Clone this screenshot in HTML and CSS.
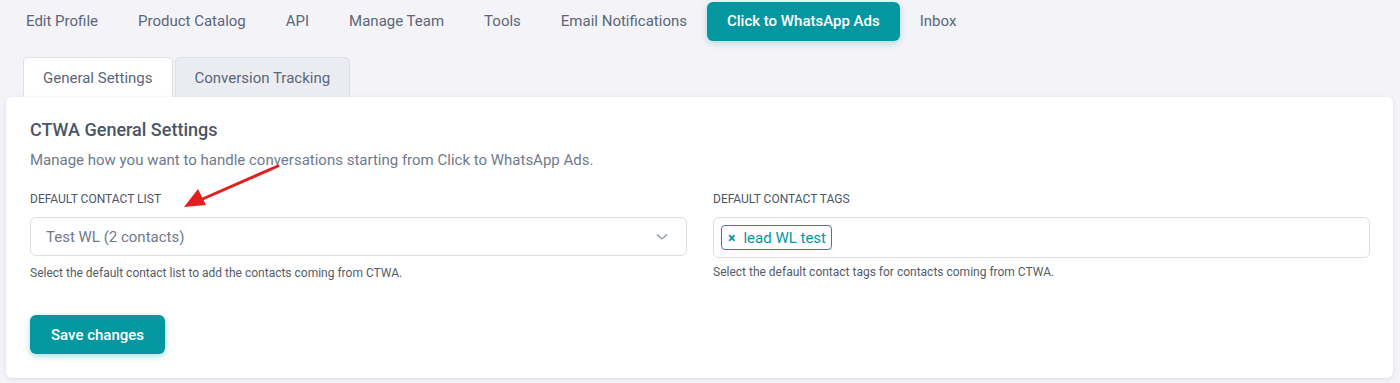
FILE: index.html
```html
<!DOCTYPE html>
<html>
<head>
<meta charset="utf-8">
<link rel="stylesheet" href="styles.css">
</head>
<body>
<div class="page">
  <nav class="topnav">
    <a class="nav-item">Edit Profile</a>
    <a class="nav-item">Product Catalog</a>
    <a class="nav-item">API</a>
    <a class="nav-item">Manage Team</a>
    <a class="nav-item">Tools</a>
    <a class="nav-item">Email Notifications</a>
    <a class="nav-item active">Click to WhatsApp Ads</a>
    <a class="nav-item">Inbox</a>
  </nav>
  <div class="subtabs">
    <div class="subtab active">General Settings</div>
    <div class="subtab">Conversion Tracking</div>
  </div>
  <section class="card">
    <h2 class="card-title">CTWA General Settings</h2>
    <p class="card-desc">Manage how you want to handle conversations starting from Click to WhatsApp Ads.</p>
    <div class="fields">
      <div class="field">
        <label class="field-label">DEFAULT CONTACT LIST</label>
        <div class="select">
          <span class="select-value">Test WL (2 contacts)</span>
          <svg class="chevron" width="12" height="8" viewBox="0 0 12 8"><path d="M1 1.5 L6 6 L11 1.5" fill="none" stroke="#8a94a6" stroke-width="1.3"/></svg>
        </div>
        <p class="help">Select the default contact list to add the contacts coming from CTWA.</p>
      </div>
      <div class="field">
        <label class="field-label">DEFAULT CONTACT TAGS</label>
        <div class="tags-input">
          <span class="tag"><span class="tag-x">×</span>lead WL test</span>
        </div>
        <p class="help">Select the default contact tags for contacts coming from CTWA.</p>
      </div>
    </div>
    <button class="btn">Save changes</button>
    <svg class="arrow" width="110" height="50" viewBox="0 0 110 50">
      <line x1="100" y1="3" x2="20" y2="38" stroke="#e41e1e" stroke-width="3" stroke-linecap="round"/>
      <polygon points="6,44 20,26 28,42" fill="#e41e1e"/>
    </svg>
  </section>
</div>
</body>
</html>
```
FILE: styles.css
```css
* { box-sizing: border-box; }
html, body { margin: 0; padding: 0; }
body {
  background: #f3f3f8;
  font-family: Roboto, "Liberation Sans", sans-serif;
  color: #4b5566;
  width: 1400px;
  height: 383px;
  overflow: hidden;
}
.page { padding: 2px 7px 0 6px; }
.topnav {
  display: flex;
  align-items: center;
  height: 39px;
}
.nav-item {
  display: flex;
  align-items: center;
  height: 39px;
  padding: 0 20px 1px;
  font-size: 15px;
  color: #5b6679;
  border-radius: 6px;
}
.nav-item.active {
  background: #05979f;
  color: #fff;
  font-weight: 500;
  box-shadow: 0 2px 6px rgba(5, 151, 159, 0.3);
}
.subtabs {
  display: flex;
  gap: 2px;
  margin-top: 16px;
  padding-left: 17px;
}
.subtab {
  height: 40px;
  display: flex;
  align-items: center;
  padding: 0 19px;
  font-size: 15px;
  color: #5b6679;
  background: #ebecf1;
  border: 1px solid #dfe1e7;
  border-bottom: none;
  border-radius: 5px 5px 0 0;
}
.subtab.active { background: #fff; }
.card {
  position: relative;
  background: #fff;
  border-radius: 6px;
  box-shadow: 0 1px 4px rgba(60, 70, 110, 0.12);
  padding: 22px 23px 25px 24px;
  height: 281px;
}
.card-title {
  margin: 0;
  font-size: 18px;
  font-weight: 500;
  color: #4b5566;
  line-height: 22px;
}
.card-desc {
  margin: 10px 0 0;
  font-size: 15px;
  color: #6f7a8c;
  line-height: 18px;
}
.fields {
  display: grid;
  grid-template-columns: 1fr 1fr;
  gap: 26px;
  margin-top: 23px;
}
.field-label {
  display: block;
  font-size: 12px;
  color: #4b5566;
  line-height: 14px;
  margin-bottom: 11px;
}
.select {
  height: 39px;
  border: 1px solid #dcdee4;
  border-radius: 6px;
  display: flex;
  align-items: center;
  justify-content: space-between;
  padding: 0 18px 0 15px;
}
.select-value { font-size: 15px; color: #6f7a8c; }
.tags-input {
  height: 41px;
  border: 1px solid #dcdee4;
  border-radius: 6px;
  display: flex;
  align-items: center;
  padding: 0 7px;
}
.tag {
  display: inline-flex;
  align-items: center;
  height: 25px;
  padding: 0 5px 0 6px;
  border: 1px solid #05979f;
  border-radius: 4px;
  color: #05979f;
  font-size: 15px;
}
.tag-x { font-size: 14px; font-weight: 700; margin-right: 8px; }
.help {
  margin: 10px 0 0;
  font-size: 12px;
  color: #555c66;
  line-height: 14px;
}
.field:last-child .help { margin-top: 7px; }
.btn {
  margin-top: 35px;
  height: 39px;
  padding: 0 21px;
  border: none;
  border-radius: 6px;
  background: #05979f;
  color: #fff;
  font-family: Roboto, "Liberation Sans", sans-serif;
  font-size: 15px;
  font-weight: 500;
  box-shadow: 0 2px 6px rgba(5, 151, 159, 0.35);
}
.arrow {
  position: absolute;
  left: 172px;
  top: 66px;
}
```
